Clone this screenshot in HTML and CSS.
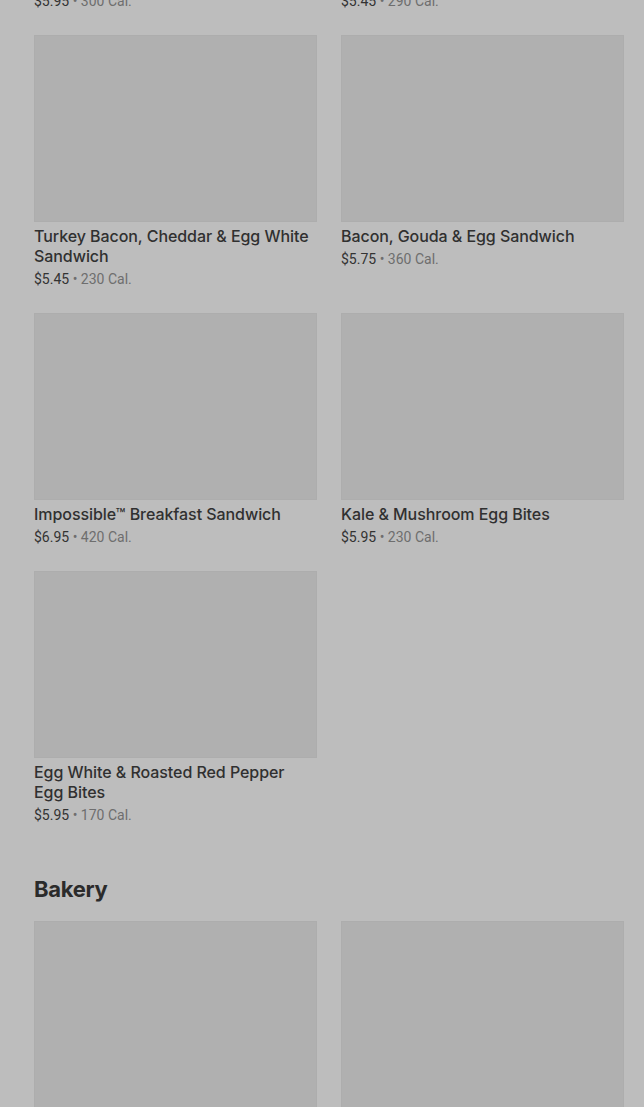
FILE: index.html
```html
<!DOCTYPE html>
<html lang="en">
<head>
    <meta charset="UTF-8">
    <meta name="viewport" content="width=device-width, initial-scale=1.0">
    <title>Menu</title>
    <link rel="stylesheet" href="styles.css">
</head>
<body>
    <div class="menu">
        <section class="category">
            <div class="grid">
                <div class="item">
                    <div class="thumb"></div>
                    <p class="name">Bacon &amp; Gruyère Egg Bites</p>
                    <p class="meta">$5.95 <span class="cal">• 300 Cal.</span></p>
                </div>
                <div class="item">
                    <div class="thumb"></div>
                    <p class="name">Spinach, Feta &amp; Egg White Wrap</p>
                    <p class="meta">$5.45 <span class="cal">• 290 Cal.</span></p>
                </div>
                <div class="item">
                    <div class="thumb"></div>
                    <p class="name">Turkey Bacon, Cheddar &amp; Egg White Sandwich</p>
                    <p class="meta">$5.45 <span class="cal">• 230 Cal.</span></p>
                </div>
                <div class="item">
                    <div class="thumb"></div>
                    <p class="name">Bacon, Gouda &amp; Egg Sandwich</p>
                    <p class="meta">$5.75 <span class="cal">• 360 Cal.</span></p>
                </div>
                <div class="item">
                    <div class="thumb"></div>
                    <p class="name">Impossible™ Breakfast Sandwich</p>
                    <p class="meta">$6.95 <span class="cal">• 420 Cal.</span></p>
                </div>
                <div class="item">
                    <div class="thumb"></div>
                    <p class="name">Kale &amp; Mushroom Egg Bites</p>
                    <p class="meta">$5.95 <span class="cal">• 230 Cal.</span></p>
                </div>
                <div class="item">
                    <div class="thumb"></div>
                    <p class="name">Egg White &amp; Roasted Red Pepper Egg Bites</p>
                    <p class="meta">$5.95 <span class="cal">• 170 Cal.</span></p>
                </div>
            </div>
        </section>

        <section class="category">
            <h2>Bakery</h2>
            <div class="grid">
                <div class="item">
                    <div class="thumb"></div>
                </div>
                <div class="item">
                    <div class="thumb"></div>
                </div>
            </div>
        </section>
    </div>
</body>
</html>
```

FILE: styles.css
```css
body {
    margin: 0;
    background-color: #bdbdbd;
    font-family: Roboto, "Liberation Sans", sans-serif;
    overflow: hidden;
}
.menu {
    /* page is scrolled: the first row only shows its price line */
    margin-top: -223px;
    padding: 0 20px 0 34px;
}
.category {
    margin-bottom: 50px;
}
.category h2 {
    margin: 0 0 18px 0;
    font-family: Inter, Roboto, sans-serif;
    font-size: 22px;
    line-height: 28px;
    font-weight: 700;
    color: #2b2b2b;
    letter-spacing: -0.3px;
}
.grid {
    display: grid;
    grid-template-columns: 283px 283px;
    column-gap: 24px;
    row-gap: 24px;
}
.thumb {
    height: 187px;
    background-color: #b0b0b0;
    border: 1px solid #adadad;
    box-sizing: border-box;
}
.name {
    margin: 4px 0 0 0;
    font-family: Inter, Roboto, sans-serif;
    font-size: 16px;
    line-height: 20px;
    font-weight: 500;
    color: #303030;
    letter-spacing: -0.06px;
}
.meta {
    margin: 3px 0 0 0;
    font-size: 14px;
    line-height: 20px;
    color: #333;
}
.cal {
    color: #6e6e6e;
}
```
